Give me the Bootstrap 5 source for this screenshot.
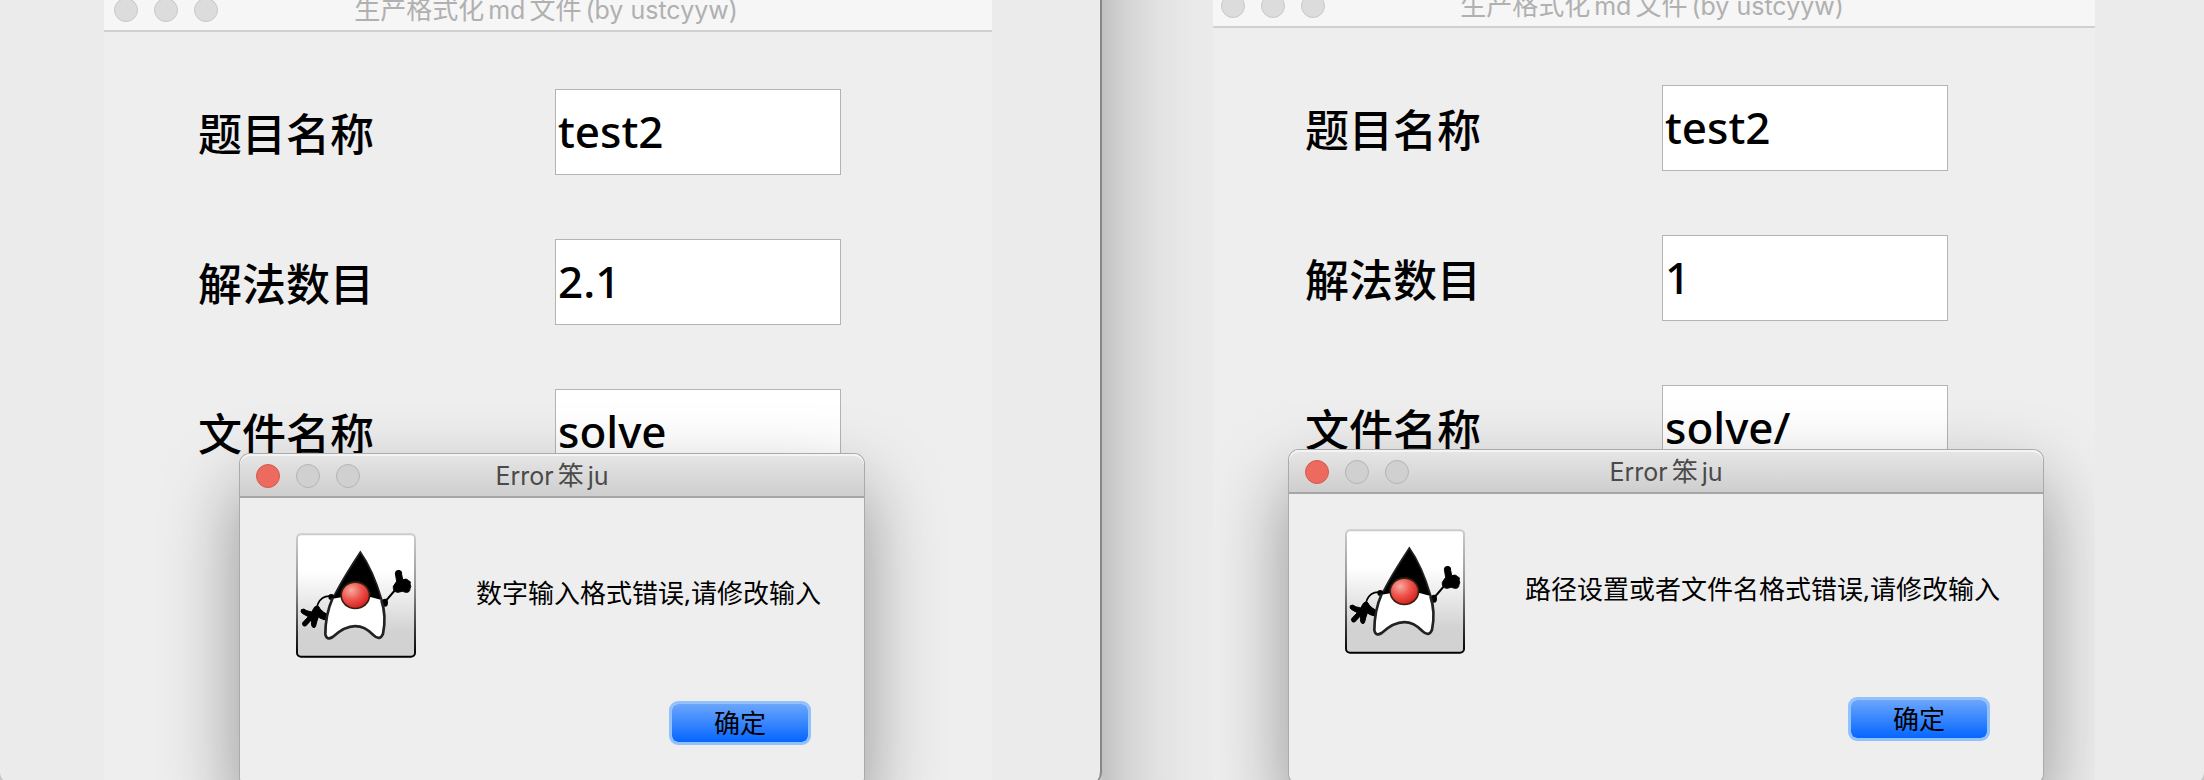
<!DOCTYPE html>
<html lang="zh-CN">
<head>
<meta charset="utf-8">
<meta name="viewport" content="width=device-width, initial-scale=1">
<title>生产格式化md文件</title>
<link href="https://cdn.jsdelivr.net/npm/bootstrap@5.3.0/dist/css/bootstrap.min.css" rel="stylesheet">
<style>
  :root { --ui: Inter, "Noto Sans CJK SC", sans-serif; --swing: "Noto Sans", "Noto Sans CJK SC", sans-serif; }
  body { background: #c6c6c6; color: #000; font-family: var(--swing); overflow: hidden; }
  .pane { background: #ebebeb; overflow: hidden; border-radius: 0 0 12px 12px; padding: 0 108px 0 104px; }
  .pane-first { border-right: 2px solid #888; }
  .pane-shaded { padding: 0 109px 0 111px; background: linear-gradient(90deg, #c1c1c1 0, #d4d4d4 24px, #e2e2e2 56px, #e9e9e9 88px, #ebebeb 112px); }
  .frame { background: #eee; margin-top: -12px; min-height: calc(100vh + 16px); }
  .pane-shaded .frame { margin-top: -16px; }
  .bar { height: 44px; font: 26px/44px var(--ui); }
  .bar b { font-size: 25px; font-weight: 400; padding: 0 4px; }
  .frame > .bar { background: #f6f6f6; border-bottom: 2px solid #d0d0d0; color: #b0b0b0; }
  .lights { position: absolute; left: 10px; top: 10px; gap: 16px; }
  .pane-shaded .frame > .bar .lights { left: 8px; }
  .lamp { width: 24px; height: 24px; border-radius: 50%; border: 1px solid #c8c8c8; background: #dcdcdc; }
  .fields { padding: 57px 94px; gap: 64px; }
  .fields label { width: 357px; padding-top: 3px; font: 500 44px/60px var(--swing); }
  .fields .form-control { width: 286px; height: 86px; padding: 0 2px 2px; border: 1px solid #b4b4b4; border-radius: 0; background: #fff; color: #000; font: 500 44px/60px var(--swing); }
  .pane-shaded .fields { padding-left: 92px; }
  .alert-box { position: absolute; top: 466px; left: 136px; background: #eee; border-radius: 10px; box-shadow: 0 0 0 1px #aaa, 0 34px 76px 2px rgba(0,0,0,.38); height: 334px; }
  .pane-shaded .alert-box { left: 76px; }
  .alert-box .bar { background: linear-gradient(#e6e6e6, #cecece); border-bottom: 2px solid #a6a6a6; border-radius: 10px 10px 0 0; box-shadow: inset 0 2px #f4f4f4; color: #4a4a4a; }
  .alert-box .lights, .pane-shaded .alert-box .lights { left: 16px; }
  .alert-box .lamp { background: #d0d0d0; border-color: #b4b4b4; }
  .alert-box .lamp-red { background: #ed6a5e; border-color: #d35950; }
  .note { padding: 35px 43px 0 56px; gap: 60px; }
  .note p { padding-bottom: 6px; font-size: 26px; line-height: 40px; white-space: nowrap; }
  .duke { width: 120px; height: 125px; flex: none; }
  .actions { padding: 43px 53px 0; }
  .btn-ok { width: 142px; height: 44px; padding: 0; font-size: 26px; line-height: 36px; color: #000; border: 3px solid #93c2fb; border-radius: 9px; background: linear-gradient(#6ba6fc, #0566ff) padding-box; }
</style>
</head>
<body>
<svg width="0" height="0" class="position-absolute" aria-hidden="true">
  <defs>
    <linearGradient id="tile" x1="0" y1="0" x2="0" y2="1"><stop offset=".3" stop-color="#fff"/><stop offset=".8" stop-color="#d2d2d2"/></linearGradient>
    <linearGradient id="rim" x1="0" y1="0" x2="0" y2="1"><stop offset="0" stop-color="#ccc"/><stop offset=".4" stop-color="#999"/><stop offset="1" stop-color="#000"/></linearGradient>
    <radialGradient id="nose" cx=".35" cy=".3" r=".75"><stop offset="0" stop-color="#f8aba0"/><stop offset=".5" stop-color="#ee5850"/><stop offset="1" stop-color="#d6201f"/></radialGradient>
    <symbol id="duke" viewBox="0 0 360 375">
      <rect x="3" y="4" width="354" height="367" rx="12" fill="url(#tile)" stroke="url(#rim)" stroke-width="6"/>
      <path d="M193 57 Q135 145 110 197 L258 202 Q231 110 193 57Z" fill="#000" stroke="#222" stroke-width="5"/>
      <path d="M107 190 Q78 186 66 212 Q62 221 62 235" fill="none" stroke="#000" stroke-width="5"/>
      <path d="M263 211 L300 168" stroke="#000" stroke-width="6"/>
      <path d="M56 222 Q68 214 72 228 Q84 240 93 244 V262 L76 257 L67 252 Q63 262 59 279 Q57 286 51 283 Q45 281 47 260 L29 279 Q18 281 20 269 L37 251 L22 243 Q12 238 16 230 Q23 225 32 233 L47 237Z" fill="#000" stroke="#000" stroke-width="3" stroke-linejoin="round"/>
      <path d="M298 121 Q298 112 309 112 Q319 114 317 124 L320 140 Q332 135 338 143 Q346 145 342 153 Q347 160 342 167 Q342 179 329 178 L319 175 L306 178 Q290 177 292 160 L302 145Z" fill="#000" stroke="#000" stroke-width="3" stroke-linejoin="round"/>
      <circle cx="106" cy="192" r="9"/><ellipse cx="267" cy="209" rx="9" ry="12"/><ellipse cx="88" cy="252" rx="9" ry="10"/>
      <path d="M107 198 Q88 245 88 304 Q92 323 110 312 Q178 250 232 306 Q252 325 261 302 Q270 249 256 201 L224 192 Q180 218 139 192Z" fill="#fff"/>
      <path d="M110 195 Q88 245 88 304 Q92 323 110 312 Q178 250 232 306 Q252 325 261 302 Q272 249 256 201" fill="none" stroke="#222" stroke-width="8" stroke-linejoin="round"/>
      <ellipse cx="178" cy="187" rx="45" ry="42" fill="#321"/><ellipse cx="178" cy="187" rx="40" ry="37" fill="url(#nose)"/>
    </symbol>
  </defs>
</svg>
<main class="d-flex min-vh-100">
  <section class="pane pane-first w-50">
    <div class="frame position-relative overflow-hidden">
      <header class="bar position-relative text-center"><span class="lights d-flex"><i class="lamp"></i><i class="lamp"></i><i class="lamp"></i></span>生产格式化<b>md</b>文件<b>(by ustcyyw)</b></header>
      <form class="fields d-flex flex-column">
        <div class="d-flex align-items-center"><label for="a1">题目名称</label><input id="a1" class="form-control" value="test2"></div>
        <div class="d-flex align-items-center"><label for="a2">解法数目</label><input id="a2" class="form-control" value="2.1"></div>
        <div class="d-flex align-items-center"><label for="a3">文件名称</label><input id="a3" class="form-control" value="solve"></div>
      </form>
      <div class="alert-box" role="dialog" aria-label="Error">
        <header class="bar position-relative text-center"><span class="lights d-flex"><i class="lamp lamp-red"></i><i class="lamp"></i><i class="lamp"></i></span><b>Error</b>笨<b>ju</b></header>
        <div class="note d-flex align-items-center"><svg class="duke"><use href="#duke"/></svg><p class="m-0">数字输入格式错误,请修改输入</p></div>
        <div class="actions d-flex justify-content-end"><button type="button" class="btn btn-ok">确定</button></div>
      </div>
    </div>
  </section>
  <section class="pane pane-shaded w-50">
    <div class="frame position-relative overflow-hidden">
      <header class="bar position-relative text-center"><span class="lights d-flex"><i class="lamp"></i><i class="lamp"></i><i class="lamp"></i></span>生产格式化<b>md</b>文件<b>(by ustcyyw)</b></header>
      <form class="fields d-flex flex-column">
        <div class="d-flex align-items-center"><label for="b1">题目名称</label><input id="b1" class="form-control" value="test2"></div>
        <div class="d-flex align-items-center"><label for="b2">解法数目</label><input id="b2" class="form-control" value="1"></div>
        <div class="d-flex align-items-center"><label for="b3">文件名称</label><input id="b3" class="form-control" value="solve/"></div>
      </form>
      <div class="alert-box" role="dialog" aria-label="Error">
        <header class="bar position-relative text-center"><span class="lights d-flex"><i class="lamp lamp-red"></i><i class="lamp"></i><i class="lamp"></i></span><b>Error</b>笨<b>ju</b></header>
        <div class="note d-flex align-items-center"><svg class="duke"><use href="#duke"/></svg><p class="m-0">路径设置或者文件名格式错误,请修改输入</p></div>
        <div class="actions d-flex justify-content-end"><button type="button" class="btn btn-ok">确定</button></div>
      </div>
    </div>
  </section>
</main>
<script src="https://cdn.jsdelivr.net/npm/bootstrap@5.3.0/dist/js/bootstrap.bundle.min.js"></script>
</body>
</html>
